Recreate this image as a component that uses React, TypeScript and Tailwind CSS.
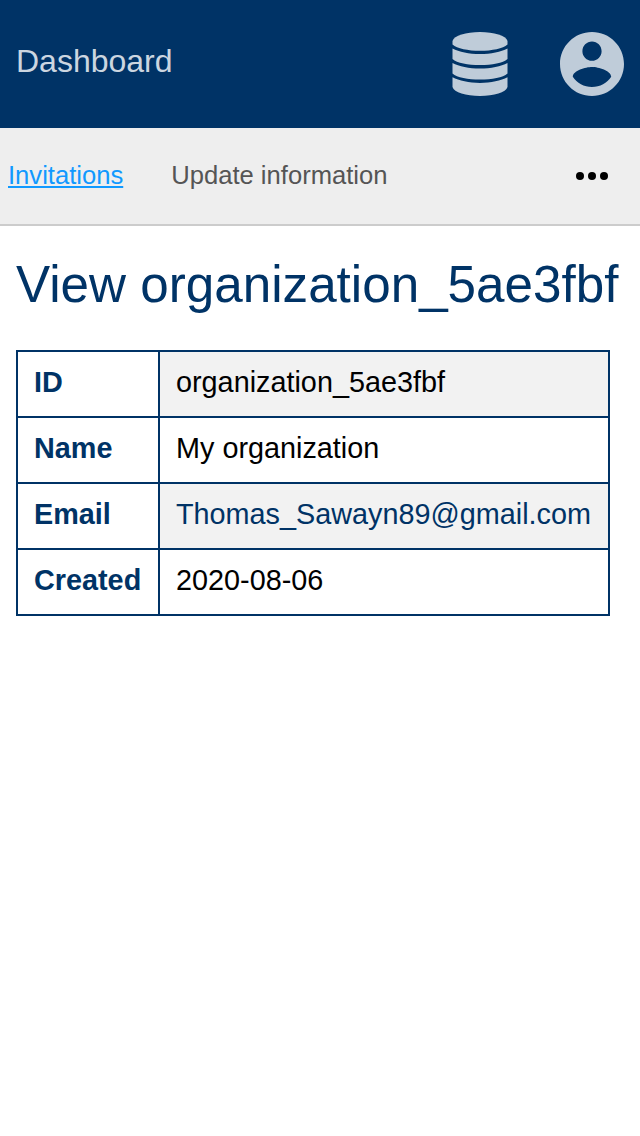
import React from "react";

const rows = [
  { label: "ID", value: "organization_5ae3fbf" },
  { label: "Name", value: "My organization" },
  { label: "Email", value: "Thomas_Sawayn89@gmail.com", link: true },
  { label: "Created", value: "2020-08-06" },
];

function DatabaseIcon() {
  return (
    <svg viewBox="0 0 56 64" className="h-16 w-14" fill="currentColor" aria-hidden="true">
      <path d="M.5 9C2 3.500 14 0 28 0S54 3.500 55.500 9V12.500C51 16.500 40 18.800 28 18.800S5 16.500 .5 12.500Z" />
      <path d="M.5 16.500C7 20 17 22 28 22S49 20 55.500 16.500V27C51 31 40 33 28 33S5 31 .5 27Z" />
      <path d="M.5 31C7 34.500 17 36.500 28 36.500S49 34.500 55.500 31V41.500C51 45.500 40 47.500 28 47.500S5 45.500 .5 41.500Z" />
      <path d="M.5 45.300C7 48.800 17 50.900 28 50.900S49 48.800 55.500 45.300V55C54 60.500 42 64 28 64S2 60.500 .5 55Z" />
    </svg>
  );
}

export default function App() {
  return (
    <div className="min-h-[1136px] bg-white font-['Liberation_Sans',Arial,sans-serif] text-black">
      <header className="flex h-32 items-center justify-between bg-[#003366] px-4 text-[#bfccd9]">
        <a className="pb-1.5 text-[32px] leading-[38px] text-[#ccd6e0]">Dashboard</a>
        <div className="flex items-center gap-[52px]">
          <DatabaseIcon />
          <svg viewBox="2 2 20 20" className="size-16" fill="currentColor" aria-hidden="true">
            <path d="M12 2C6.480 2 2 6.480 2 12s4.480 10 10 10 10-4.480 10-10S17.520 2 12 2zm0 3c1.660 0 3 1.340 3 3s-1.340 3-3 3-3-1.340-3-3 1.340-3 3-3zm0 14.200c-2.500 0-4.710-1.280-6-3.220.03-1.990 4-3.080 6-3.080 1.990 0 5.970 1.090 6 3.080-1.290 1.940-3.500 3.220-6 3.220z" />
          </svg>
        </div>
      </header>
      <nav className="flex h-[98px] items-center border-b-2 border-[#cccccc] bg-[#eeeeee] pl-2 pr-8 text-[25.600px] leading-8">
        <a className="pb-0.5 text-[#1199ff] underline">Invitations</a>
        <a className="ml-12 pb-0.5 text-[#555555]">Update information</a>
        <svg viewBox="0 0 32 8" className="ml-auto h-2 w-8" aria-hidden="true">
          <circle cx="4" cy="4" r="4" />
          <circle cx="16" cy="4" r="4" />
          <circle cx="28" cy="4" r="4" />
        </svg>
      </nav>
      <main className="px-4 pt-[27px]">
        <h1 className="whitespace-nowrap text-[51.200px] leading-[64px] text-[#003366]">View organization_5ae3fbf</h1>
        <table className="mt-[33px] w-[594px] table-fixed border-collapse text-[28.800px] leading-8">
          <colgroup>
            <col className="w-[142px]" />
            <col />
          </colgroup>
          <tbody>
            {rows.map((row) => (
              <tr key={row.label} className="h-[66px] odd:[&>td]:bg-[#f2f2f2]">
                <th className="border-2 border-[#003366] px-4 pb-1 text-left font-bold text-[#003366]">{row.label}</th>
                <td className={row.link ? "border-2 border-[#003366] px-4 pb-1 text-[#003366]" : "border-2 border-[#003366] px-4 pb-1"}>
                  {row.value}
                </td>
              </tr>
            ))}
          </tbody>
        </table>
      </main>
    </div>
  );
}
